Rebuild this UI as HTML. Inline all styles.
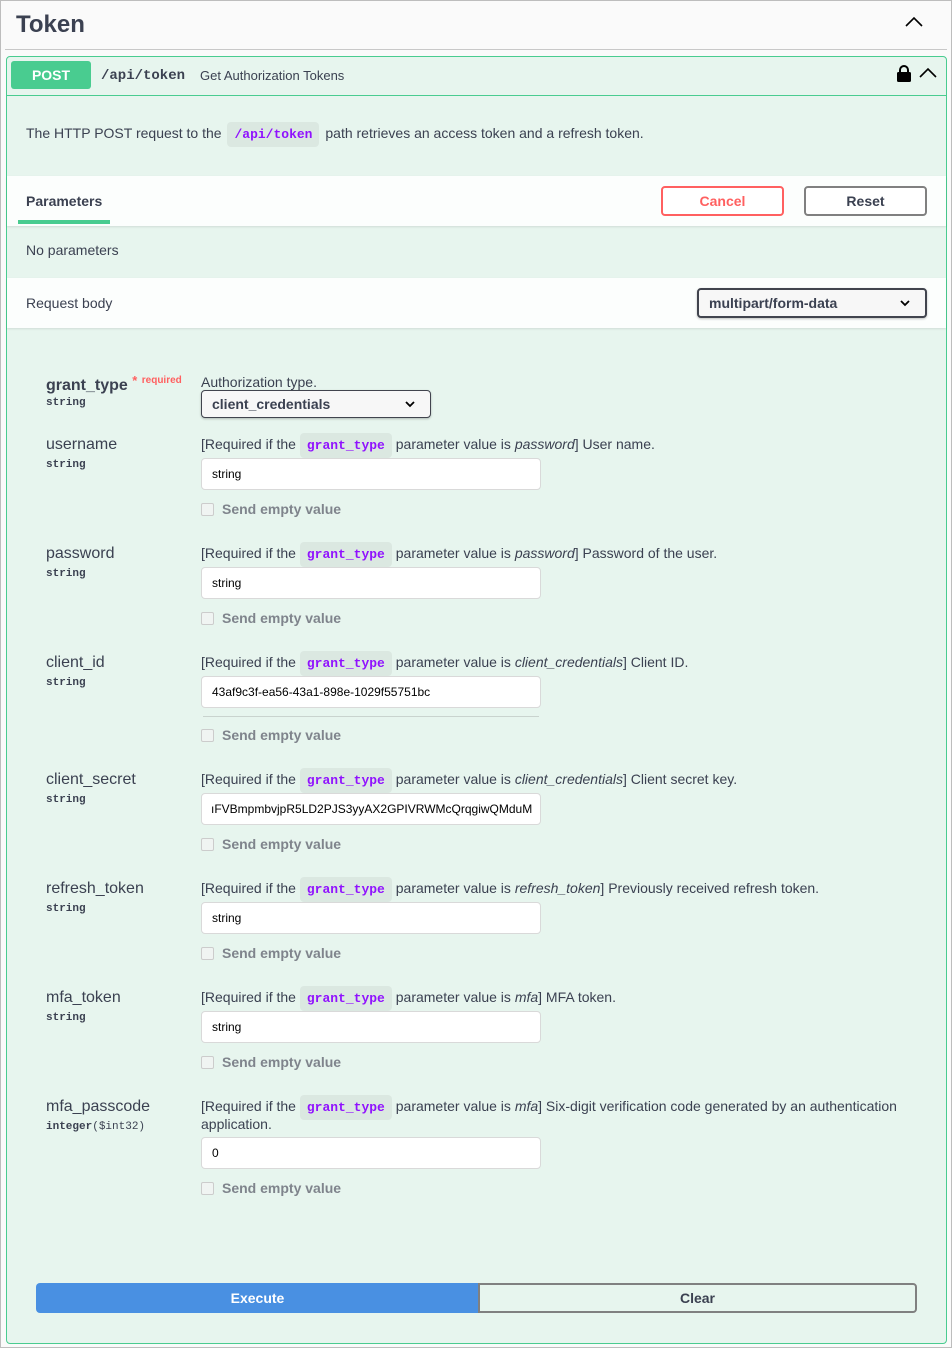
<!DOCTYPE html>
<html><head><meta charset="utf-8"><style>
*{box-sizing:border-box;margin:0;padding:0}
body{width:952px;height:1348px;background:#fff;font-family:"Liberation Sans",sans-serif;color:#3b4151;position:relative;overflow:hidden}
.a{position:absolute}
.mono{font-family:"Liberation Mono","DejaVu Sans Mono",monospace}
.code{background:rgba(0,0,0,.05);color:#9012fe;font-family:"Liberation Mono",monospace;font-weight:bold;font-size:13px;border-radius:4px;padding:5px 7px;}
.lbl{font-size:16px;color:#3b4151;left:46px}
.typ{font-size:11px;font-weight:bold;left:46px;font-family:"Liberation Mono",monospace}
.desc{left:201px;font-size:14px;color:#3b4151;white-space:nowrap}
.inp{left:201px;width:340px;height:32px;background:#fff;border:1px solid #d9d9d9;border-radius:4px;font-size:12px;color:#000;padding:8px 10px;line-height:14px;white-space:nowrap;overflow:hidden}
.chk{left:201px;font-size:14px;font-weight:bold;color:#7f848c}
.chk i{display:inline-block;width:13px;height:13px;border:1px solid #ccc;border-radius:2px;background:#f0f4f2;vertical-align:-2px;margin-right:8px}
</style></head><body>
<div class="a" style="left:0;top:0;width:952px;height:1348px;border:1px solid #bdbdbd;background:#fafafa"></div>
<div class="a" style="left:16px;top:11px;font-size:24px;font-weight:bold;color:#3b4151">Token</div>
<svg class="a" style="left:904px;top:15px" width="20" height="14" viewBox="0 0 20 14"><path d="M2 11 L10 3 L18 11" fill="none" stroke="#000" stroke-width="1.6"/></svg>
<div class="a" style="left:5px;top:49px;width:942px;height:1px;background:#c8c8c8"></div>

<div class="a" style="left:6px;top:56px;width:941px;height:1288px;border:1px solid #49cc90;border-radius:4px;background:#e7f5ee"></div>
<div class="a" style="left:7px;top:95px;width:939px;height:1px;background:#49cc90"></div>
<div class="a" style="left:11px;top:61px;width:80px;height:28px;background:#49cc90;border-radius:3px;color:#fff;font-weight:bold;font-size:14px;text-align:center;line-height:28px">POST</div>
<div class="a mono" style="left:101px;top:68px;font-size:14px;font-weight:bold;color:#3b4151">/api/token</div>
<div class="a" style="left:200px;top:68px;font-size:13px;color:#3b4151">Get Authorization Tokens</div>
<svg class="a" style="left:896px;top:64px" width="16" height="19" viewBox="0 0 16 19"><path d="M4 9V6a4 4 0 0 1 8 0v3" fill="none" stroke="#000" stroke-width="2"/><rect x="1" y="8" width="14" height="10" rx="1.5" fill="#000"/></svg>
<svg class="a" style="left:918px;top:66px" width="20" height="14" viewBox="0 0 20 14"><path d="M2 11 L10 3 L18 11" fill="none" stroke="#000" stroke-width="1.6"/></svg>

<div class="a" style="left:26px;top:125px;font-size:14px;white-space:nowrap">The HTTP POST request to the <span class="code" style="padding:5px 7px;margin:0 2px">/api/token</span> path retrieves an access token and a refresh token.</div>

<div class="a" style="left:7px;top:176px;width:939px;height:50px;background:rgba(255,255,255,.85);box-shadow:0 1px 2px rgba(0,0,0,.1)"></div>
<div class="a" style="left:26px;top:193px;font-size:14px;font-weight:bold">Parameters</div>
<div class="a" style="left:18px;top:220px;width:92px;height:4px;background:#49cc90"></div>
<div class="a" style="left:661px;top:186px;width:123px;height:30px;border:2px solid #ff6060;border-radius:4px;color:#ff6060;font-weight:bold;font-size:14px;text-align:center;line-height:26px;background:#fff">Cancel</div>
<div class="a" style="left:804px;top:186px;width:123px;height:30px;border:2px solid #808080;border-radius:4px;color:#3b4151;font-weight:bold;font-size:14px;text-align:center;line-height:26px;background:#fff">Reset</div>

<div class="a" style="left:26px;top:242px;font-size:14px">No parameters</div>
<div class="a" style="left:7px;top:278px;width:939px;height:50px;background:rgba(255,255,255,.85);box-shadow:0 1px 2px rgba(0,0,0,.1)"></div>
<div class="a" style="left:26px;top:295px;font-size:14px">Request body</div>
<div class="a" style="left:697px;top:288px;width:230px;height:30px;border:2px solid #41444e;border-radius:4px;background:#f7f7f7;font-weight:bold;font-size:14px;padding:5px 10px;box-shadow:0 1px 2px rgba(0,0,0,.25)">multipart/form-data</div>
<svg class="a" style="left:899px;top:298px" width="12" height="10" viewBox="0 0 12 10"><path d="M2 3 L6 7 L10 3" fill="none" stroke="#000" stroke-width="1.8"/></svg>

<!-- grant_type -->
<div class="a lbl" style="top:373px;font-weight:bold">grant_type <span style="color:#ff6060;font-size:13px;vertical-align:5px">*</span> <span style="color:#ff6060;font-size:10px;vertical-align:7px">required</span></div>
<div class="a typ" style="top:397px">string</div>
<div class="a desc" style="top:374px">Authorization type.</div>
<div class="a" style="left:201px;top:390px;width:230px;height:28px;border:1px solid #41444e;border-radius:4px;background:#f7f7f7;font-weight:bold;font-size:14px;padding:5px 10px;box-shadow:0 1px 2px rgba(0,0,0,.25)">client_credentials</div>
<svg class="a" style="left:404px;top:399px" width="12" height="10" viewBox="0 0 12 10"><path d="M2 3 L6 7 L10 3" fill="none" stroke="#000" stroke-width="1.8"/></svg>

<!-- rows -->
<div class="a lbl" style="top:436px">username</div><div class="a typ" style="top:459px">string</div>
<div class="a desc" style="top:436px">[Required if the <span class="code">grant_type</span> parameter value is <i>password</i>] User name.</div>
<div class="a inp" style="top:458px">string</div>
<div class="a chk" style="top:501px"><i></i>Send empty value</div>

<div class="a lbl" style="top:545px">password</div><div class="a typ" style="top:568px">string</div>
<div class="a desc" style="top:545px">[Required if the <span class="code">grant_type</span> parameter value is <i>password</i>] Password of the user.</div>
<div class="a inp" style="top:567px">string</div>
<div class="a chk" style="top:610px"><i></i>Send empty value</div>

<div class="a lbl" style="top:654px">client_id</div><div class="a typ" style="top:677px">string</div>
<div class="a desc" style="top:654px">[Required if the <span class="code">grant_type</span> parameter value is <i>client_credentials</i>] Client ID.</div>
<div class="a inp" style="top:676px">43af9c3f-ea56-43a1-898e-1029f55751bc</div>
<div class="a" style="left:203px;top:716px;width:336px;height:1px;background:#c9d3ce"></div>
<div class="a chk" style="top:727px"><i></i>Send empty value</div>

<div class="a lbl" style="top:771px">client_secret</div><div class="a typ" style="top:794px">string</div>
<div class="a desc" style="top:771px">[Required if the <span class="code">grant_type</span> parameter value is <i>client_credentials</i>] Client secret key.</div>
<div class="a inp" style="top:793px;padding-left:9px">ıFVBmpmbvjpR5LD2PJS3yyAX2GPIVRWMcQrqgiwQMduM</div>
<div class="a chk" style="top:836px"><i></i>Send empty value</div>

<div class="a lbl" style="top:880px">refresh_token</div><div class="a typ" style="top:903px">string</div>
<div class="a desc" style="top:880px">[Required if the <span class="code">grant_type</span> parameter value is <i>refresh_token</i>] Previously received refresh token.</div>
<div class="a inp" style="top:902px">string</div>
<div class="a chk" style="top:945px"><i></i>Send empty value</div>

<div class="a lbl" style="top:989px">mfa_token</div><div class="a typ" style="top:1012px">string</div>
<div class="a desc" style="top:989px">[Required if the <span class="code">grant_type</span> parameter value is <i>mfa</i>] MFA token.</div>
<div class="a inp" style="top:1011px">string</div>
<div class="a chk" style="top:1054px"><i></i>Send empty value</div>

<div class="a lbl" style="top:1098px">mfa_passcode</div><div class="a typ" style="top:1121px">integer<span style="font-weight:normal">($int32)</span></div>
<div class="a desc" style="top:1098px;line-height:17px">[Required if the <span class="code">grant_type</span> parameter value is <i>mfa</i>] Six-digit verification code generated by an authentication<br>application.</div>
<div class="a inp" style="top:1137px">0</div>
<div class="a chk" style="top:1180px"><i></i>Send empty value</div>

<div class="a" style="left:36px;top:1283px;width:443px;height:30px;background:#4990e2;border-radius:4px 0 0 4px;color:#fff;font-weight:bold;font-size:14px;text-align:center;line-height:30px">Execute</div>
<div class="a" style="left:478px;top:1283px;width:439px;height:30px;border:2px solid #808080;border-radius:0 4px 4px 0;color:#3b4151;font-weight:bold;font-size:14px;text-align:center;line-height:26px">Clear</div>
</body></html>
